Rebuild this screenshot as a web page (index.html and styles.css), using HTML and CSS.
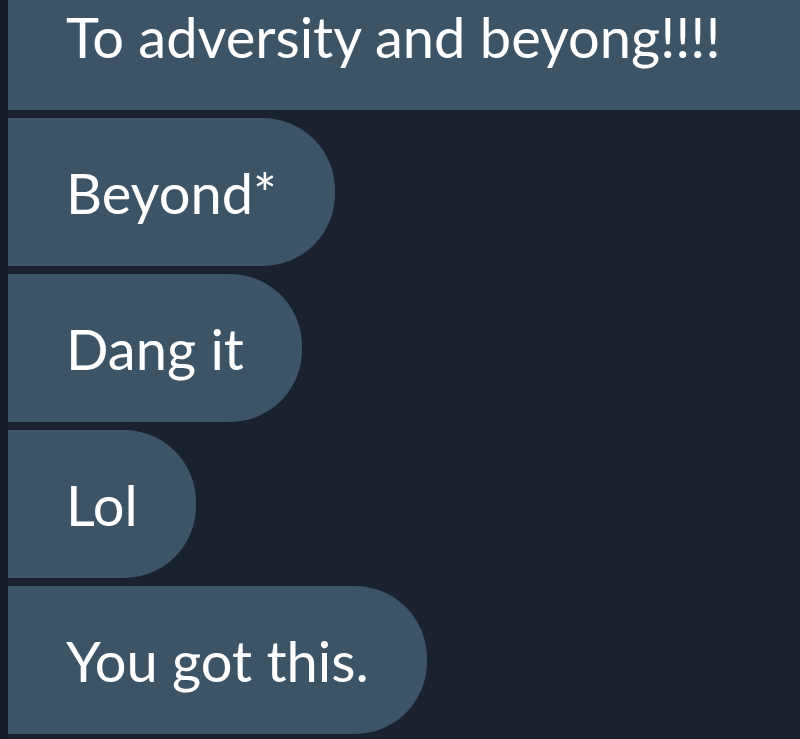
FILE: index.html
```html
<!DOCTYPE html>
<html lang="en">
<head>
    <meta charset="UTF-8">
    <meta name="viewport" content="width=device-width, initial-scale=1.0">
    <title>Messages</title>
    <link rel="stylesheet" href="styles.css">
</head>
<body>
    <div class="thread">
        <div class="bubble wide">To adversity and beyong!!!!</div>
        <div class="bubble">Beyond*</div>
        <div class="bubble">Dang it</div>
        <div class="bubble">Lol</div>
        <div class="bubble">You got this.</div>
    </div>
</body>
</html>
```

FILE: styles.css
```css
/* General styles */
html, body {
    margin: 0;
    padding: 0;
    height: 100%;
    overflow: hidden;
}

body {
    background-color: #1a222d;
    font-family: Lato, sans-serif;
    color: #fff;
    border-left: 8px solid #141c25;
}

/* Message list */
.thread {
    display: flex;
    flex-direction: column;
    align-items: flex-start;
    gap: 8px;
    margin-top: -38px;
}

.bubble {
    box-sizing: border-box;
    height: 148px;
    display: flex;
    align-items: center;
    padding: 0 58px;
    background-color: #3d5366;
    border-radius: 0 72px 72px 0;
    font-size: 56px;
    white-space: nowrap;
}

.bubble.wide {
    align-self: stretch;
    border-radius: 0;
}
```
